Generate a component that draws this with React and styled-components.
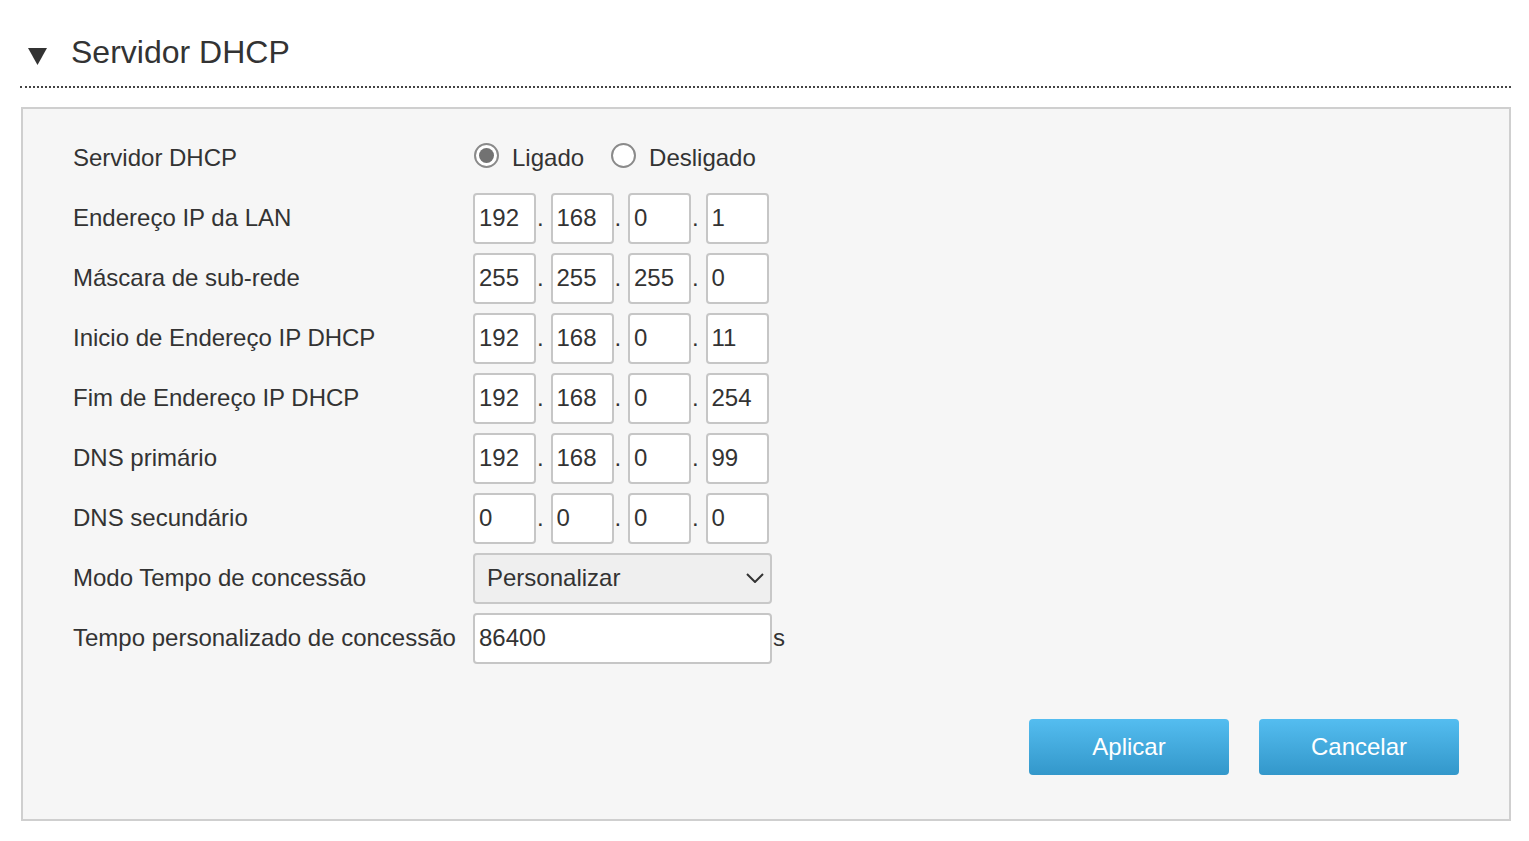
import React, { useState } from 'react';
import styled, { createGlobalStyle } from 'styled-components';

const GlobalStyle = createGlobalStyle`
  body {
    margin: 0;
    background: #fff;
    font-family: "Liberation Sans", Arial, sans-serif;
    color: #333;
  }
`;

const Page = styled.div`
  width: 1491px;
  margin-left: 20px;
`;

const Header = styled.div`
  display: flex;
  align-items: center;
  height: 36px;
  padding: 34px 0 16px 8px;
  border-bottom: 2px dotted #444;
  cursor: pointer;
`;

const Caret = styled.svg`
  width: 19px;
  height: 17px;
  margin-top: 9px;
  margin-right: 24px;
`;

const Title = styled.h2`
  margin: 0;
  font-size: 32px;
  font-weight: normal;
  line-height: 36px;
  color: #333;
`;

const Panel = styled.div`
  margin-top: 19px;
  margin-left: 1px;
  border: 2px solid #cfcfcf;
  background: #f6f6f6;
  padding: 19px 50px 44px 50px;
`;

const Row = styled.div`
  display: flex;
  align-items: center;
  height: 60px;
`;

const Label = styled.div`
  width: 400px;
  font-size: 24px;
  line-height: 28px;
  color: #333;
`;

const RadioGroup = styled.div`
  display: flex;
  align-items: center;
`;

const RadioLabel = styled.label`
  display: flex;
  align-items: center;
  font-size: 24px;
  color: #333;
  margin-right: 26px;
  cursor: pointer;
`;

const RadioCircle = styled.span`
  box-sizing: border-box;
  width: 25px;
  height: 25px;
  border-radius: 50%;
  border: 2px solid #8a8a8a;
  background: #fff;
  margin: 0 13px 5px 1px;
  display: flex;
  align-items: center;
  justify-content: center;
  &::after {
    content: '';
    width: 15px;
    height: 15px;
    border-radius: 50%;
    background: ${p => (p.$checked ? '#727272' : 'transparent')};
  }
`;

const IpGroup = styled.div`
  display: flex;
  align-items: baseline;
`;

const Octet = styled.input`
  box-sizing: border-box;
  width: 63px;
  height: 51px;
  border: 2px solid #c6c6c6;
  border-radius: 4px;
  background: #fff;
  padding: 0 0 0 4px;
  font-family: "Liberation Sans", Arial, sans-serif;
  font-size: 24px;
  color: #333;
  outline: none;
`;

const Dot = styled.span`
  width: 14.5px;
  padding-left: 1px;
  box-sizing: border-box;
  font-size: 24px;
  color: #333;
`;

const SelectBox = styled.div`
  box-sizing: border-box;
  width: 299px;
  height: 51px;
  border: 2px solid #c8c8c8;
  border-radius: 4px;
  background: #efefef;
  display: flex;
  align-items: center;
  justify-content: space-between;
  padding: 0 6px 0 12px;
  font-size: 24px;
  color: #333;
`;

const Chevron = styled.svg`
  width: 18px;
  height: 10px;
`;

const TextField = styled.input`
  box-sizing: border-box;
  width: 299px;
  height: 51px;
  border: 2px solid #c6c6c6;
  border-radius: 4px;
  background: #fff;
  padding: 0 0 0 4px;
  font-family: "Liberation Sans", Arial, sans-serif;
  font-size: 24px;
  color: #333;
  outline: none;
`;

const Unit = styled.span`
  font-size: 24px;
  color: #333;
  margin-left: 1px;
`;

const ButtonBar = styled.div`
  display: flex;
  justify-content: flex-end;
  gap: 30px;
  margin-top: 51px;
`;

const Button = styled.button`
  width: 200px;
  height: 56px;
  border: none;
  border-radius: 4px;
  background: linear-gradient(to bottom, #54bdf0, #3397ca);
  color: #fff;
  font-family: "Liberation Sans", Arial, sans-serif;
  font-size: 24px;
  cursor: pointer;
`;

const ipRows = [
  { label: 'Endereço IP da LAN', value: ['192', '168', '0', '1'] },
  { label: 'Máscara de sub-rede', value: ['255', '255', '255', '0'] },
  { label: 'Inicio de Endereço IP DHCP', value: ['192', '168', '0', '11'] },
  { label: 'Fim de Endereço IP DHCP', value: ['192', '168', '0', '254'] },
  { label: 'DNS primário', value: ['192', '168', '0', '99'] },
  { label: 'DNS secundário', value: ['0', '0', '0', '0'] },
];

const IpInput = ({ value }) => (
  <IpGroup>
    {value.map((v, i) => (
      <React.Fragment key={i}>
        {i > 0 && <Dot>.</Dot>}
        <Octet defaultValue={v} />
      </React.Fragment>
    ))}
  </IpGroup>
);

const App = () => {
  const [on, setOn] = useState(true);

  return (
    <>
      <GlobalStyle />
      <Page>
        <Header>
          <Caret viewBox="0 0 19 17">
            <polygon points="0,0 19,0 9.5,17" fill="#333" />
          </Caret>
          <Title>Servidor DHCP</Title>
        </Header>
        <Panel>
          <Row>
            <Label>Servidor DHCP</Label>
            <RadioGroup>
              <RadioLabel onClick={() => setOn(true)}>
                <RadioCircle $checked={on} />
                Ligado
              </RadioLabel>
              <RadioLabel onClick={() => setOn(false)}>
                <RadioCircle $checked={!on} />
                Desligado
              </RadioLabel>
            </RadioGroup>
          </Row>
          {ipRows.map(r => (
            <Row key={r.label}>
              <Label>{r.label}</Label>
              <IpInput value={r.value} />
            </Row>
          ))}
          <Row>
            <Label>Modo Tempo de concessão</Label>
            <SelectBox>
              Personalizar
              <Chevron viewBox="0 0 18 10">
                <polyline points="1,1 9,9 17,1" fill="none" stroke="#333" strokeWidth="2" />
              </Chevron>
            </SelectBox>
          </Row>
          <Row>
            <Label>Tempo personalizado de concessão</Label>
            <TextField defaultValue="86400" />
            <Unit>s</Unit>
          </Row>
          <ButtonBar>
            <Button>Aplicar</Button>
            <Button>Cancelar</Button>
          </ButtonBar>
        </Panel>
      </Page>
    </>
  );
};

export default App;
